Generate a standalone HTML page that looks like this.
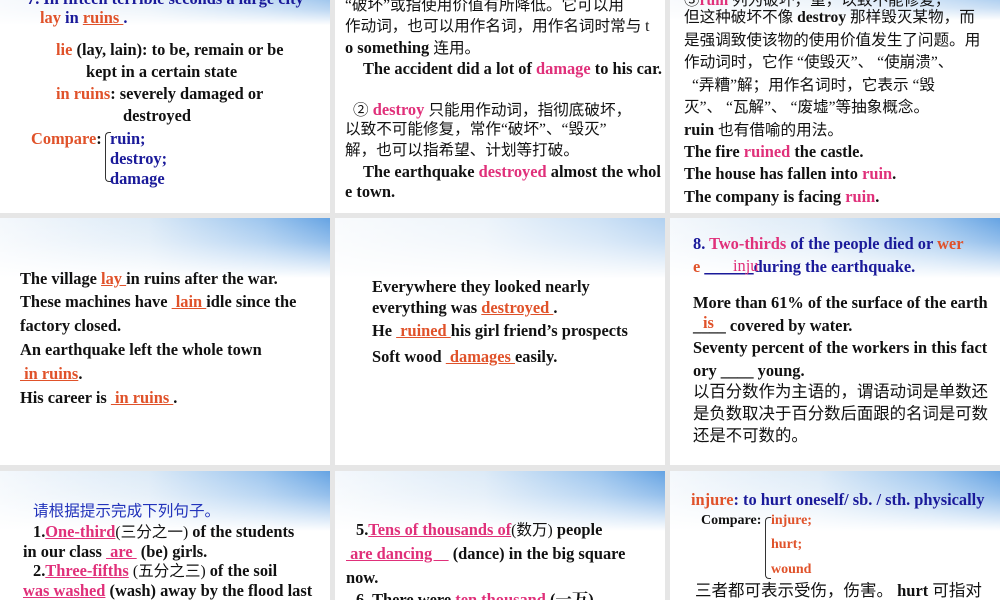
<!DOCTYPE html>
<html><head><meta charset="utf-8"><style>
*{margin:0;padding:0;box-sizing:border-box}
body{width:1000px;height:600px;background:#e6e6e6;position:relative;overflow:hidden;font-family:"Liberation Serif","Noto Serif CJK SC","Noto Sans CJK SC",serif;font-weight:bold;font-size:16.4px;color:#111}
.s{position:absolute;background:#fff;overflow:hidden}
.hd{position:absolute;left:0;top:0;width:100%;height:60px;background:linear-gradient(to bottom,rgba(255,255,255,0) 0,rgba(255,255,255,0.3) 40%,#fff 100%),linear-gradient(to right,#f4f8fc 0,#dceaf7 45%,#9cc5ee 80%,#65a3e3 100%)}
.t{position:absolute;white-space:nowrap;line-height:22px}
.r{color:#e0522a}.p{color:#e0307a}.b{color:#1a1a9a}
.u{text-decoration:underline}
.cn{font-family:"Liberation Serif","Noto Sans CJK SC",sans-serif;font-weight:normal;font-size:15.6px}
</style></head><body>

<!-- row1 -->
<div class="s" style="left:0;top:0;width:330px;height:213px">
<div class="hd" style="height:25px;opacity:.6"></div>
<div class="t b" style="left:27px;top:-12px">7. In fifteen terrible seconds a large city</div>
<div class="t b" style="left:40px;top:7px"><span class="r">lay</span> in <span class="r u">ruins </span>.</div>
<div class="t" style="left:56px;top:39px"><span class="r">lie</span> (lay, lain): to be, remain or be</div>
<div class="t" style="left:86px;top:61px">kept in a certain state</div>
<div class="t" style="left:56px;top:83px"><span class="r">in ruins</span>: severely damaged or</div>
<div class="t" style="left:123px;top:105px">destroyed</div>
<div class="t" style="left:31px;top:128px"><span class="r">Compare</span>:</div>
<div style="position:absolute;left:105px;top:132px;width:6px;height:50px;border:1px solid #333;border-right:none;border-radius:4px 0 0 4px"></div>
<div class="t b" style="left:110px;top:128px">ruin;</div>
<div class="t b" style="left:110px;top:148px">destroy;</div>
<div class="t b" style="left:110px;top:168px">damage</div>
</div>

<div class="s" style="left:335px;top:0;width:330px;height:213px">
<div class="t cn" style="left:10px;top:-5px">“破坏”或指使用价值有所降低。它可以用</div>
<div class="t cn" style="left:10px;top:16px">作动词，也可以用作名词，用作名词时常与 t</div>
<div class="t" style="left:10px;top:37px">o something <span class="cn">连用。</span></div>
<div class="t" style="left:28px;top:58px">The accident did a lot of <span class="p">damage</span> to his car.</div>
<div class="t" style="left:18px;top:99px"><span class="cn">②</span> <span class="p">destroy</span> <span class="cn">只能用作动词，指彻底破坏，</span></div>
<div class="t cn" style="left:10px;top:119px">以致不可能修复，常作“破坏”、“毁灭”</div>
<div class="t cn" style="left:10px;top:140px">解，也可以指希望、计划等打破。</div>
<div class="t" style="left:28px;top:161px">The earthquake <span class="p">destroyed</span> almost the whol</div>
<div class="t" style="left:10px;top:181px">e town.</div>
</div>

<div class="s" style="left:670px;top:0;width:330px;height:213px">
<div class="hd" style="height:20px;opacity:.5"></div>
<div class="t cn" style="left:14px;top:-10px">③<span class="p" style="font-weight:bold">ruin</span> 列为破坏，重，以致不能修复，</div>
<div class="t cn" style="left:14px;top:7px">但这种破坏不像 <b>destroy</b> 那样毁灭某物，而</div>
<div class="t cn" style="left:14px;top:30px">是强调致使该物的使用价值发生了问题。用</div>
<div class="t cn" style="left:14px;top:52px">作动词时，它作 “使毁灭”、 “使崩溃”、</div>
<div class="t cn" style="left:22px;top:75px">“弄糟”解；用作名词时，它表示 “毁</div>
<div class="t cn" style="left:14px;top:97px">灭”、 “瓦解”、 “废墟”等抽象概念。</div>
<div class="t" style="left:14px;top:119px">ruin <span class="cn">也有借喻的用法。</span></div>
<div class="t" style="left:14px;top:141px">The fire <span class="p">ruined</span> the castle.</div>
<div class="t" style="left:14px;top:163px">The house has fallen into <span class="p">ruin</span>.</div>
<div class="t" style="left:14px;top:186px">The company is facing <span class="p">ruin</span>.</div>
</div>

<!-- row2 -->
<div class="s" style="left:0;top:218px;width:330px;height:247px">
<div class="hd"></div>
<div class="t" style="left:20px;top:50px">The village <span class="r u">lay </span> in ruins after the war.</div>
<div class="t" style="left:20px;top:73px">These machines have <span class="r u">&nbsp;lain </span> idle since the</div>
<div class="t" style="left:20px;top:97px">factory closed.</div>
<div class="t" style="left:20px;top:121px">An earthquake left the whole town</div>
<div class="t" style="left:20px;top:145px"><span class="r u">&nbsp;in ruins</span>.</div>
<div class="t" style="left:20px;top:169px">His career is <span class="r u">&nbsp;in ruins&nbsp;</span>.</div>
</div>

<div class="s" style="left:335px;top:218px;width:330px;height:247px">
<div class="hd" style="opacity:.5"></div>
<div class="t" style="left:37px;top:58px">Everywhere they looked nearly</div>
<div class="t" style="left:37px;top:79px">everything was <span class="r u">destroyed </span>.</div>
<div class="t" style="left:37px;top:102px">He <span class="r u">&nbsp;ruined </span> his girl friend’s prospects</div>
<div class="t" style="left:37px;top:128px">Soft wood <span class="r u">&nbsp;damages </span> easily.</div>
</div>

<div class="s" style="left:670px;top:218px;width:330px;height:247px">
<div class="hd"></div>
<div class="t b" style="left:23px;top:15px">8. <span class="p">Two-thirds</span> of the people died or <span class="r">wer</span></div>
<div class="t b" style="left:23px;top:38px"><span class="r">e</span> <span class="u">______</span>during the earthquake.</div>
<div class="t p" style="left:63px;top:37px;font-weight:normal">inju</div>
<div class="t" style="left:23px;top:74px">More than 61% of the surface of the earth</div>
<div class="t" style="left:23px;top:97px">____ covered by water.</div>
<div class="t r" style="left:33px;top:94px">is</div>
<div class="t" style="left:23px;top:119px">Seventy percent of the workers in this fact</div>
<div class="t" style="left:23px;top:142px">ory ____ young.</div>
<div class="t cn" style="left:23px;top:163px;font-size:16.4px">以百分数作为主语的，谓语动词是单数还</div>
<div class="t cn" style="left:23px;top:185px;font-size:16.4px">是负数取决于百分数后面跟的名词是可数</div>
<div class="t cn" style="left:23px;top:207px;font-size:16.4px">还是不可数的。</div>
</div>

<!-- row3 -->
<div class="s" style="left:0;top:471px;width:330px;height:129px">
<div class="hd"></div>
<div class="t cn" style="left:33px;top:30px;color:#2233bb">请根据提示完成下列句子。</div>
<div class="t" style="left:33px;top:50px">1.<span class="p u">One-third</span><span class="cn">(三分之一)</span> of the students</div>
<div class="t" style="left:23px;top:70px">in our class <span class="p u">&nbsp;are&nbsp;</span> (be) girls.</div>
<div class="t" style="left:33px;top:89px">2.<span class="p u">Three-fifths</span> <span class="cn">(五分之三)</span> of the soil</div>
<div class="t" style="left:23px;top:109px"><span class="p u">was washed</span> (wash) away by the flood last</div>
</div>

<div class="s" style="left:335px;top:471px;width:330px;height:129px">
<div class="hd"></div>
<div class="t" style="left:21px;top:48px">5.<span class="p u">Tens of thousands of</span><span class="cn">(数万)</span> people</div>
<div class="t" style="left:11px;top:72px"><span class="p u">&nbsp;are dancing&nbsp;&nbsp;&nbsp;&nbsp;</span> (dance) in the big square</div>
<div class="t" style="left:11px;top:96px">now.</div>
<div class="t" style="left:21px;top:118px">6. There were <span class="p">ten thousand</span> (一万)</div>
</div>

<div class="s" style="left:670px;top:471px;width:330px;height:129px">
<div class="hd"></div>
<div class="t b" style="left:21px;top:18px"><span class="r">injure</span>: to hurt oneself/ sb. / sth. physically</div>
<div class="t" style="left:31px;top:39px;font-size:14px">Compare:</div>
<div style="position:absolute;left:95px;top:46px;width:6px;height:62px;border:1px solid #333;border-right:none;border-radius:4px 0 0 4px"></div>
<div class="t r" style="left:101px;top:39px;font-size:14px">injure;</div>
<div class="t r" style="left:101px;top:63px;font-size:14px">hurt;</div>
<div class="t r" style="left:101px;top:88px;font-size:14px">wound</div>
<div class="t cn" style="left:25px;top:109px;font-size:16.5px">三者都可表示受伤，伤害。 <b>hurt</b> 可指对</div>
</div>

</body></html>
